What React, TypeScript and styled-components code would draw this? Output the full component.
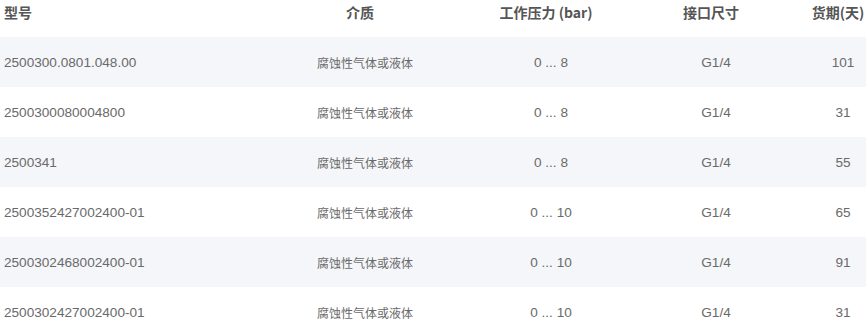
import React from 'react';
import styled, { createGlobalStyle } from 'styled-components';

const GlobalStyle = createGlobalStyle`
  html, body {
    margin: 0;
    padding: 0;
    background: #ffffff;
  }
  body {
    font-family: "Liberation Sans", Arial, "Noto Sans CJK SC", sans-serif;
    overflow: hidden;
  }
`;

const Table = styled.div`
  width: 866px;
  display: flex;
  flex-direction: column;
`;

const Row = styled.div<{ $striped?: boolean; $head?: boolean }>`
  display: grid;
  grid-template-columns: 240px 240px 132px 198px 56px;
  height: ${p => (p.$head ? '37px' : '50px')};
  align-items: ${p => (p.$head ? 'start' : 'center')};
  background: ${p => (p.$striped ? '#f5f6f9' : '#ffffff')};
`;

const HeadCell = styled.div<{ $first?: boolean }>`
  padding-left: ${p => (p.$first ? '4px' : '0')};
  text-align: ${p => (p.$first ? 'left' : 'center')};
  line-height: 24px;
  font-size: 14px;
  font-weight: bold;
  color: #555555;
  white-space: nowrap;
  font-family: "Noto Sans CJK SC", "Liberation Sans", sans-serif;
`;

const Cell = styled.div<{ $first?: boolean; $cjk?: boolean }>`
  padding-left: ${p => (p.$first ? '4px' : '10px')};
  text-align: ${p => (p.$first ? 'left' : 'center')};
  font-size: ${p => (p.$cjk ? '12px' : '13.6px')};
  color: #6a6a6a;
  white-space: nowrap;
  font-family: ${p => (p.$cjk
    ? '"Noto Sans CJK SC", "Liberation Sans", sans-serif'
    : '"Liberation Sans", "Noto Sans CJK SC", sans-serif')};
`;

interface IItem {
  model: string,
  medium: string,
  pressure: string,
  port: string,
  days: number
}

const items: IItem[] = [
  { model: '2500300.0801.048.00', medium: '腐蚀性气体或液体', pressure: '0 ... 8', port: 'G1/4', days: 101 },
  { model: '2500300080004800', medium: '腐蚀性气体或液体', pressure: '0 ... 8', port: 'G1/4', days: 31 },
  { model: '2500341', medium: '腐蚀性气体或液体', pressure: '0 ... 8', port: 'G1/4', days: 55 },
  { model: '2500352427002400-01', medium: '腐蚀性气体或液体', pressure: '0 ... 10', port: 'G1/4', days: 65 },
  { model: '2500302468002400-01', medium: '腐蚀性气体或液体', pressure: '0 ... 10', port: 'G1/4', days: 91 },
  { model: '2500302427002400-01', medium: '腐蚀性气体或液体', pressure: '0 ... 10', port: 'G1/4', days: 31 },
];

const App = () => {
  return (
    <>
      <GlobalStyle />
      <Table>
        <Row $head>
          <HeadCell $first>型号</HeadCell>
          <HeadCell>介质</HeadCell>
          <HeadCell>工作压力 (bar)</HeadCell>
          <HeadCell>接口尺寸</HeadCell>
          <HeadCell>货期(天)</HeadCell>
        </Row>
        {items.map((item, i) => (
          <Row key={i} $striped={i % 2 === 0}>
            <Cell $first>{item.model}</Cell>
            <Cell $cjk>{item.medium}</Cell>
            <Cell>{item.pressure}</Cell>
            <Cell>{item.port}</Cell>
            <Cell>{item.days}</Cell>
          </Row>
        ))}
      </Table>
    </>
  );
}

export default App;
